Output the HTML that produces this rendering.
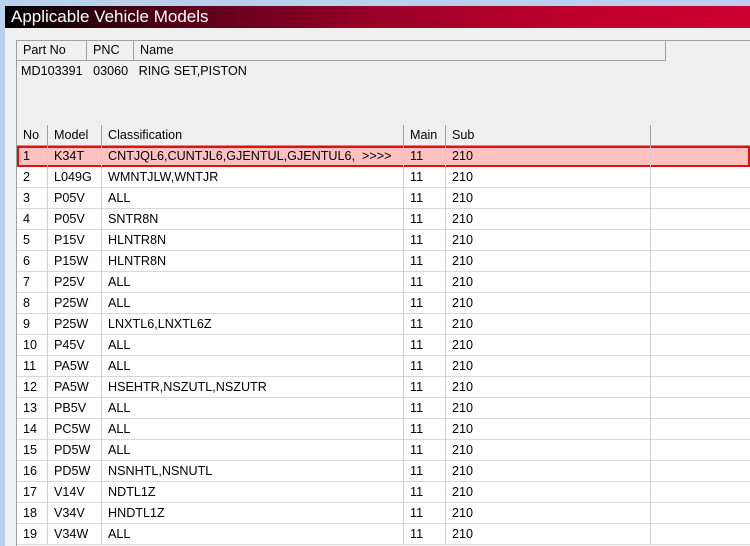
<!DOCTYPE html>
<html><head><style>
*{margin:0;padding:0;box-sizing:border-box}
body{width:750px;height:546px;overflow:hidden;background:#b9d1ea;font-family:"Liberation Sans",sans-serif;font-size:12.6px;color:#000;position:relative}
#win{position:absolute;left:5px;top:6px;right:0;bottom:0;background:#f0f0f0}
#title{position:absolute;left:0;top:0;right:0;height:22px;background:linear-gradient(90deg,#000 0%,#5a0018 25%,#9a0028 50%,#c2002c 80%,#cc0030 100%);color:#fff;font-size:17px;line-height:22px;padding-left:6px}
#pn{position:absolute;left:11px;top:34px;right:0;height:92px;border:1px solid #a0a0a0;border-right:none;background:#f0f0f0}
.ph{position:absolute;top:0;height:20px;border-right:1px solid #a0a0a0;border-bottom:1px solid #a0a0a0;line-height:19px;padding-left:6px;background:#f0f0f0}
#grid{position:absolute;left:11px;top:119px;right:0;bottom:0;background:#fff;border-left:1px solid #a0a0a0}
.r{position:absolute;left:0;right:0;height:21px;border-bottom:1px solid #d8d8d8}
.c{position:absolute;top:0;height:21px;line-height:21px;padding-left:6px;border-right:1px solid #d0d0d0;white-space:nowrap;overflow:hidden}
.h .c{background:#f0f0f0;border-right:1px solid #a0a0a0;border-bottom:1px solid #a0a0a0;line-height:20px}
.sel{background:#ffc0c0;box-shadow:inset 0 0 0 2px #e01010;border-bottom:none}
</style></head><body>
<div id="win">
<div id="title">Applicable Vehicle Models</div>
<div id="pn">
<div class="ph" style="left:0;width:70px">Part No</div>
<div class="ph" style="left:70px;width:47px">PNC</div>
<div class="ph" style="left:117px;width:532px">Name</div>
<div style="position:absolute;left:4px;top:23px;white-space:pre">MD103391   03060   RING SET,PISTON</div>
</div>
<div id="grid">
<div class="r h" style="top:0;border:none"><div class="c" style="left:0;width:31px">No</div><div class="c" style="left:31px;width:54px">Model</div><div class="c" style="left:85px;width:302px">Classification</div><div class="c" style="left:387px;width:42px">Main</div><div class="c" style="left:429px;width:205px">Sub</div><div class="c" style="left:634px;width:200px"></div></div>
</div>
</div>
<script>
var d=[["1","K34T","CNTJQL6,CUNTJL6,GJENTUL,GJENTUL6,  >>>>"],["2","L049G","WMNTJLW,WNTJR"],["3","P05V","ALL"],["4","P05V","SNTR8N"],["5","P15V","HLNTR8N"],["6","P15W","HLNTR8N"],["7","P25V","ALL"],["8","P25W","ALL"],["9","P25W","LNXTL6,LNXTL6Z"],["10","P45V","ALL"],["11","PA5W","ALL"],["12","PA5W","HSEHTR,NSZUTL,NSZUTR"],["13","PB5V","ALL"],["14","PC5W","ALL"],["15","PD5W","ALL"],["16","PD5W","NSNHTL,NSNUTL"],["17","V14V","NDTL1Z"],["18","V34V","HNDTL1Z"],["19","V34W","ALL"]];
var g=document.getElementById('grid'),h='';
d.forEach(function(r,i){var s=i==0?' sel':'';var t=21+i*21;
h+='<div class="r'+s+'" style="top:'+t+'px">'+
'<div class="c" style="left:0;width:31px">'+r[0]+'</div>'+
'<div class="c" style="left:31px;width:54px">'+r[1]+'</div>'+
'<div class="c" style="left:85px;width:302px;white-space:pre">'+r[2]+'</div>'+
'<div class="c" style="left:387px;width:42px">11</div>'+
'<div class="c" style="left:429px;width:205px">210</div></div>';});
g.innerHTML+=h;
</script>
</body></html>
